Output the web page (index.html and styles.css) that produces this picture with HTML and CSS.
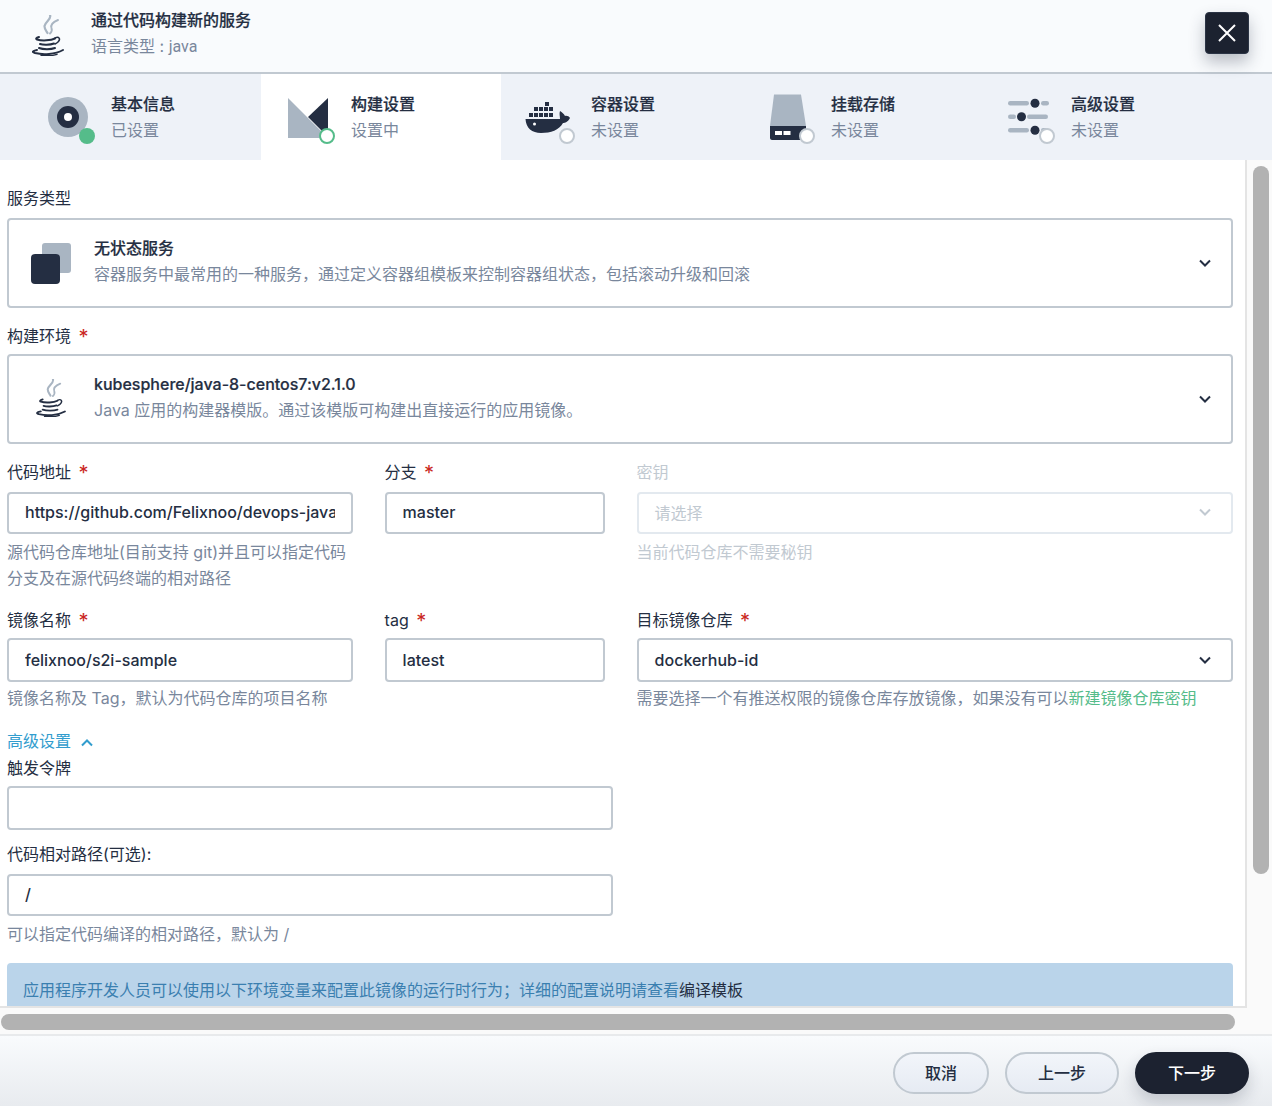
FILE: index.html
```html
<!DOCTYPE html>
<html lang="zh-CN">
<head>
    <meta charset="UTF-8">
    <meta name="viewport" content="width=device-width, initial-scale=1.0">
    <title>通过代码构建新的服务</title>
    <link rel="stylesheet" href="styles.css">
</head>
<body>
    <svg class="sprites" width="0" height="0">
        <symbol id="java" viewBox="0 0 32 41">
            <g fill="none" stroke-linecap="round">
                <path d="M18 0C20 4 13 7 12.500 11C12.300 14 14.500 16 15.500 18" stroke="#a9b5c2" stroke-width="2.200"/>
                <path d="M26 5C21 7 18.500 10 19.500 13C20.300 15 19.500 17 18 18.500" stroke="#a9b5c2" stroke-width="1.900"/>
                <g stroke="#242e42">
                    <path d="M7 22C4 23 3.500 24 5 24.500C10 26 19 25.500 23 23.500" stroke-width="2"/>
                    <path d="M8 29C11 30 18 30 22 28.500" stroke-width="2"/>
                    <path d="M7 33C11 34.500 19 34.500 23 33" stroke-width="2"/>
                    <path d="M23 23C27 21 29 24 26 27C25 28 24 28.500 23 29" stroke-width="1.500"/>
                    <path d="M5 35C0 36 0 37 3 38C11 40 23 39.500 31 35" stroke-width="2"/>
                    <path d="M9 40.300C15 41 21 40.700 25 39.300" stroke-width="1.400"/>
                </g>
            </g>
        </symbol>
    </svg>

    <div class="dialog">
        <header class="head">
            <svg class="head-icon"><use href="#java"/></svg>
            <div class="head-text">
                <div class="title">通过代码构建新的服务</div>
                <div class="sub">语言类型 : <span class="lang">java</span></div>
            </div>
            <button class="close" aria-label="关闭">
                <svg width="20" height="20" viewBox="0 0 20 20"><path d="M2 2L18 18M18 2L2 18" stroke="#fff" stroke-width="2" fill="none"/></svg>
            </button>
        </header>

        <nav class="tabs">
            <div class="tab">
                <svg class="tab-icon" viewBox="0 0 48 52">
                    <circle cx="24" cy="25" r="20" fill="#a9b5c2"/>
                    <circle cx="24" cy="25" r="11" fill="#242e42"/>
                    <circle cx="24" cy="25" r="4" fill="#fff"/>
                    <circle cx="43" cy="44" r="8" fill="#55bc8a"/>
                </svg>
                <div>
                    <div class="title">基本信息</div>
                    <div class="sub">已设置</div>
                </div>
            </div>
            <div class="tab active">
                <svg class="tab-icon" viewBox="0 0 48 52">
                    <path d="M4 6V46H44Z" fill="#a9b5c2"/>
                    <path d="M44 6L24 25L44 45Z" fill="#242e42"/>
                    <circle cx="43" cy="44" r="7" fill="#fff" stroke="#55bc8a" stroke-width="2"/>
                </svg>
                <div>
                    <div class="title">构建设置</div>
                    <div class="sub">设置中</div>
                </div>
            </div>
            <div class="tab">
                <svg class="tab-icon" viewBox="0 0 48 52">
                    <g fill="#242e42">
                        <path d="M1.500 27H36C36 24 35 22 36 19C38 20 40 22 41 24C43 23.500 45 24.500 46 26C44 30 41 31 39 31C35 38 27 41 17 41C8 41 2 36 1.500 27Z"/>
                        <rect x="21" y="10" width="4" height="4"/>
                        <rect x="10" y="15" width="4" height="4"/><rect x="15" y="15" width="4" height="4"/><rect x="20" y="15" width="4" height="4"/><rect x="25" y="15" width="4" height="4"/>
                        <rect x="5" y="21" width="4" height="4"/><rect x="10" y="21" width="4" height="4"/><rect x="15" y="21" width="4" height="4"/><rect x="20" y="21" width="4" height="4"/><rect x="25" y="21" width="4" height="4"/>
                    </g>
                    <circle cx="10.500" cy="32" r="1.500" fill="#fff"/>
                    <circle cx="43" cy="44" r="7" fill="#fff" stroke="#c1c9d1" stroke-width="2"/>
                </svg>
                <div>
                    <div class="title">容器设置</div>
                    <div class="sub">未设置</div>
                </div>
            </div>
            <div class="tab">
                <svg class="tab-icon" viewBox="0 0 48 52">
                    <path d="M10 2.500H37L42 34H6Z" fill="#a9b5c2"/>
                    <path d="M6 34H42V46C42 47 41 48 40 48H8C7 48 6 47 6 46Z" fill="#242e42"/>
                    <rect x="11" y="39" width="7" height="4" fill="#fff"/>
                    <rect x="19.500" y="39" width="7" height="4" fill="#fff"/>
                    <circle cx="43" cy="44" r="7" fill="#fff" stroke="#c1c9d1" stroke-width="2"/>
                </svg>
                <div>
                    <div class="title">挂载存储</div>
                    <div class="sub">未设置</div>
                </div>
            </div>
            <div class="tab">
                <svg class="tab-icon" viewBox="0 0 48 52">
                    <g fill="#a9b5c2">
                        <rect x="4" y="9" width="21" height="4.500" rx="2.200"/><rect x="37" y="9" width="8" height="4.500" rx="2.200"/>
                        <rect x="4" y="22.500" width="8" height="4.500" rx="2.200"/><rect x="23" y="22.500" width="21" height="4.500" rx="2.200"/>
                        <rect x="4" y="36" width="21" height="4.500" rx="2.200"/><rect x="37" y="36" width="8" height="4.500" rx="2.200"/>
                    </g>
                    <g fill="#242e42">
                        <circle cx="31" cy="11.200" r="4.500"/>
                        <circle cx="17.500" cy="24.700" r="4.500"/>
                        <circle cx="31" cy="38.200" r="4.500"/>
                    </g>
                    <circle cx="43" cy="44" r="7" fill="#fff" stroke="#c1c9d1" stroke-width="2"/>
                </svg>
                <div>
                    <div class="title">高级设置</div>
                    <div class="sub">未设置</div>
                </div>
            </div>
        </nav>

        <div class="content">
            <div class="content-left">
                <div class="pane">
                    <form class="form">
                        <div class="label first">服务类型</div>
                        <div class="select-card">
                            <div class="card-icon">
                                <svg width="40" height="41" viewBox="0 0 40 41">
                                    <rect x="11" y="0" width="29" height="30" rx="3" fill="#a9b5c2"/>
                                    <rect x="0" y="11" width="29" height="30" rx="4" fill="#242e42"/>
                                </svg>
                            </div>
                            <div class="card-text">
                                <div class="title">无状态服务</div>
                                <div class="sub">容器服务中最常用的一种服务，通过定义容器组模板来控制容器组状态，包括滚动升级和回滚</div>
                            </div>
                            <svg class="chevron" viewBox="0 0 12 8"><path d="M1 1.500L6 6.500L11 1.500"/></svg>
                        </div>

                        <div class="label env">构建环境 <span class="req">*</span></div>
                        <div class="select-card">
                            <div class="card-icon">
                                <svg class="env-icon"><use href="#java"/></svg>
                            </div>
                            <div class="card-text">
                                <div class="title">kubesphere/java-8-centos7:v2.1.0</div>
                                <div class="sub">Java 应用的构建器模版。通过该模版可构建出直接运行的应用镜像。</div>
                            </div>
                            <svg class="chevron" viewBox="0 0 12 8"><path d="M1 1.500L6 6.500L11 1.500"/></svg>
                        </div>

                        <div class="grid row-one">
                            <div>
                                <div class="label loose">代码地址 <span class="req">*</span></div>
                                <input class="input short" type="text" value="https://github.com/Felixnoo/devops-java-sample">
                                <div class="desc">源代码仓库地址(目前支持 git)并且可以指定代码分支及在源代码终端的相对路径</div>
                            </div>
                            <div>
                                <div class="label loose">分支 <span class="req">*</span></div>
                                <input class="input short" type="text" value="master">
                            </div>
                            <div>
                                <div class="label loose disabled">密钥</div>
                                <div class="input short select off">请选择
                                    <svg class="chevron" viewBox="0 0 12 8"><path d="M1 1.500L6 6.500L11 1.500"/></svg>
                                </div>
                                <div class="desc disabled">当前代码仓库不需要秘钥</div>
                            </div>
                        </div>

                        <div class="grid row-two">
                            <div>
                                <div class="label">镜像名称 <span class="req">*</span></div>
                                <input class="input" type="text" value="felixnoo/s2i-sample">
                                <div class="desc tight">镜像名称及 Tag，默认为代码仓库的项目名称</div>
                            </div>
                            <div>
                                <div class="label">tag <span class="req">*</span></div>
                                <input class="input" type="text" value="latest">
                            </div>
                            <div>
                                <div class="label">目标镜像仓库 <span class="req">*</span></div>
                                <div class="input select">dockerhub-id
                                    <svg class="chevron" viewBox="0 0 12 8"><path d="M1 1.500L6 6.500L11 1.500"/></svg>
                                </div>
                                <div class="desc tight">需要选择一个有推送权限的镜像仓库存放镜像，如果没有可以<a class="link" href="#">新建镜像仓库密钥</a></div>
                            </div>
                        </div>

                        <div class="advanced">
                            高级设置
                            <svg class="chevron-up" viewBox="0 0 12 8"><path d="M1 6.500L6 1.500L11 6.500"/></svg>
                        </div>

                        <div class="label">触发令牌</div>
                        <input class="input wide" type="text">

                        <div class="label path-label loose">代码相对路径(可选):</div>
                        <input class="input wide short" type="text" value="/">
                        <div class="desc">可以指定代码编译的相对路径，默认为 /</div>

                        <div class="alert">应用程序开发人员可以使用以下环境变量来配置此镜像的运行时行为；详细的配置说明请查看<a class="alert-link" href="#">编译模板</a></div>
                    </form>
                </div>
                <div class="hbar"><div class="hbar-thumb"></div></div>
            </div>
            <div class="vbar"><div class="vbar-thumb"></div></div>
        </div>

        <footer class="foot">
            <button class="btn cancel">取消</button>
            <button class="btn prev">上一步</button>
            <button class="btn primary">下一步</button>
        </footer>
    </div>
</body>
</html>
```

FILE: styles.css
```css
* {
    box-sizing: border-box;
}
html, body {
    margin: 0;
    height: 100%;
    overflow: hidden;
}
body {
    font-family: Inter, "Noto Sans CJK SC", sans-serif;
    font-size: 16px;
    color: #242e42;
    background: #fff;
}
.sprites {
    position: absolute;
}
.dialog {
    display: flex;
    flex-direction: column;
    height: 1106px;
}
.title {
    font-weight: 500;
    line-height: 26px;
    color: #242e42;
    -webkit-text-stroke: 0.2px #242e42;
}
.sub {
    line-height: 26px;
    color: #79879c;
}
.lang {
    font-family: Roboto, sans-serif;
}

/* header */
.head {
    flex: none;
    position: relative;
    display: flex;
    align-items: center;
    height: 74px;
    padding: 0 0 2px 32px;
    background: #f9fbfd;
    border-bottom: 2px solid #c1c9d1;
}
.head-icon {
    width: 32px;
    height: 41px;
}
.head-text {
    margin: 0 0 4px 27px;
}
.close {
    position: absolute;
    top: 12px;
    left: 1205px;
    width: 44px;
    height: 42px;
    padding: 0;
    display: flex;
    align-items: center;
    justify-content: center;
    background: #1c2230;
    border: 1px solid #2b3445;
    border-radius: 4px;
    box-shadow: 0 8px 16px rgba(36, 46, 66, 0.3);
    z-index: 2;
}

/* steps */
.tabs {
    flex: none;
    display: flex;
    height: 86px;
    padding-left: 21px;
    background: #eef2f8;
}
.tab {
    width: 240px;
    display: flex;
    align-items: center;
    gap: 19px;
    padding-left: 23px;
}
.tab.active {
    background: #fff;
}
.tab-icon {
    width: 48px;
    height: 52px;
    margin-top: 2px;
    overflow: visible;
}

/* scrolling area */
.content {
    flex: 1;
    display: flex;
    min-height: 0;
}
.content-left {
    width: 1247px;
    display: flex;
    flex-direction: column;
}
.pane {
    height: 848px;
    overflow: hidden;
    border-right: 2px solid #e4e4e4;
    border-bottom: 2px solid #e4e4e4;
}
.hbar {
    flex: 1;
    padding: 6px 0 0 1px;
    background: #fafafa;
}
.hbar-thumb {
    width: 1234px;
    height: 16px;
    border-radius: 8px;
    background: #b2b2b2;
}
.vbar {
    flex: 1;
    padding: 6px 0 0 6px;
    background: #fafafa;
}
.vbar-thumb {
    width: 16px;
    height: 708px;
    border-radius: 8px;
    background: #b2b2b2;
}

/* form */
.form {
    padding: 28px 12px 0 7px;
}
.label {
    line-height: 20px;
    margin-bottom: 8px;
    color: #242e42;
}
.label.first {
    margin-bottom: 10px;
}
.label.loose {
    margin-bottom: 10px;
}
.label.env {
    margin-top: 18px;
}
.label.path-label {
    margin-top: 14px;
}
.req {
    margin-left: 3px;
    font-size: 20px;
    line-height: 0;
    vertical-align: -2px;
    color: #ca2621;
}
.disabled {
    color: #c1c9d1 !important;
}
.select-card {
    display: flex;
    align-items: center;
    height: 90px;
    padding: 0 20px 0 22px;
    border: 2px solid #c1c9d1;
    border-radius: 4px;
}
.card-icon {
    width: 40px;
    height: 41px;
    margin-right: 23px;
    display: flex;
    justify-content: center;
}
.env-icon {
    width: 30px;
    height: 38px;
}
.card-text {
    flex: 1;
    margin-bottom: 4px;
}
.chevron {
    width: 12px;
    height: 8px;
    fill: none;
    stroke: #242e42;
    stroke-width: 2;
}
.grid {
    display: grid;
    grid-template-columns: 345.6px 220px 596.4px;
    column-gap: 32px;
}
.row-one {
    margin-top: 18px;
}
.row-two {
    margin-top: 19px;
}
.input {
    display: block;
    width: 100%;
    height: 44px;
    padding: 0 16px;
    font-family: inherit;
    font-size: 16px;
    font-weight: 500;
    color: #242e42;
    background: #fff;
    border: 2px solid #c1c9d1;
    border-radius: 4px;
    outline: none;
}
.input.short {
    height: 42px;
    padding-bottom: 2px;
}
.input.wide {
    width: 606px;
}
.select {
    display: flex;
    align-items: center;
    justify-content: space-between;
    padding-right: 20px;
}
.select.off {
    padding-bottom: 3px;
    font-weight: 400;
    color: #c1c9d1;
    border-color: #e3e9ef;
}
.select.off .chevron {
    stroke: #c1c9d1;
}
.desc {
    margin-top: 5px;
    line-height: 26px;
    color: #79879c;
}
.desc.tight {
    margin-top: 3px;
}
.link {
    color: #55bc8a;
    text-decoration: none;
}
.advanced {
    margin-top: 20px;
    margin-bottom: 7px;
    line-height: 20px;
    color: #329dce;
}
.chevron-up {
    width: 12px;
    height: 8px;
    margin-left: 5px;
    fill: none;
    stroke: #329dce;
    stroke-width: 2;
}
.alert {
    margin-top: 16px;
    height: 60px;
    padding: 14px 16px;
    line-height: 26px;
    color: #3a7fb0;
    background: #bad4ea;
    border-radius: 4px;
}
.alert-link {
    color: #242e42;
    text-decoration: none;
}

/* footer */
.foot {
    flex: none;
    display: flex;
    justify-content: flex-end;
    gap: 16px;
    height: 72px;
    padding: 16px 23px 0 0;
    background: linear-gradient(#f9fbfd, #e8ebef);
    border-top: 2px solid #e8eaec;
}
.btn {
    height: 42px;
    padding: 0 0 2px;
    font-family: inherit;
    font-size: 16px;
    font-weight: 500;
    color: #242e42;
    background: linear-gradient(#f2f5fa, #e6ebf3);
    border: 2px solid #c1c9d1;
    border-radius: 21px;
}
.cancel {
    width: 96px;
}
.prev,
.primary {
    width: 114px;
}
.primary {
    color: #fff;
    background: #1c2230;
    border-color: #1c2230;
    box-shadow: 0 8px 16px rgba(36, 46, 66, 0.2);
}
```
